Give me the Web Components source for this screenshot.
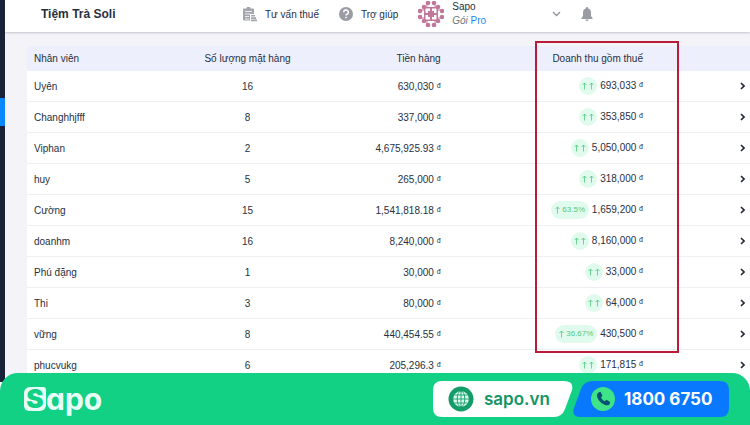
<!DOCTYPE html>
<html lang="vi">
<head>
  <meta charset="UTF-8">
  <meta name="viewport" content="width=device-width,initial-scale=1">
  <title>Tiệm Trà Soli</title>
  <style>
    html, body {
      height: 100%;
      margin: 0;
      overflow: hidden;
    }

    body {
      font-family: "Liberation Sans", Arial, sans-serif;
      font-size: 10px;
      color: #27303f;
    }
  </style>
</head>
<body>
  <soli-app>
    <soli-topbar slot="header" shop="Tiệm Trà Soli" user="Sapo" plan="Pro"></soli-topbar>
    <staff-report></staff-report>
    <sapo-footer slot="footer">
      <contact-pill slot="contacts" kind="web" href="#web">sapo.vn</contact-pill>
      <contact-pill slot="contacts" kind="phone" href="tel:18006750">1800 6750</contact-pill>
    </sapo-footer>
  </soli-app>

  <script>
    customElements.define("soli-app", class SoliApp extends HTMLElement {
      constructor() {
        super()
        this.attachShadow({ mode: "open" }).innerHTML = `
          <style>
            :host {
              display: flex;
              flex-direction: column;
              height: 100%;
              background: #fff;
            }

            .screen {
              flex: 1;
              min-height: 0;
              display: flex;
              margin-bottom: -9px;
            }

            aside {
              width: 5px;
              flex: none;
              display: flex;
              flex-direction: column;
              background: #18233a;
            }

            aside::before {
              content: "";
              height: 28px;
              margin-top: 98px;
              background: #0a88ff;
            }

            main {
              flex: 1;
              min-width: 0;
              overflow: hidden;
              background: #f3f3f8;
            }
          </style>
          <div class="screen">
            <aside></aside>
            <main>
              <slot name="header"></slot>
              <slot></slot>
            </main>
          </div>
          <slot name="footer"></slot>
        `
      }
    })

    customElements.define("soli-topbar", class SoliTopbar extends HTMLElement {
      constructor() {
        super()
        this.attachShadow({ mode: "open" }).innerHTML = `
          <style>
            :host {
              display: flex;
              align-items: center;
              height: 32px;
              padding: 0 36px;
              background: #fff;
              box-shadow: 0 1px 2px #c4c4cc;
            }

            h1 {
              flex: 1;
              margin: 0 0 4px;
              font-size: 12px;
              line-height: 16px;
            }

            nav {
              width: 472px;
              flex: none;
              display: flex;
              align-items: center;
              height: 28px;
              margin-bottom: 4px;
            }

            a {
              display: flex;
              align-items: center;
              gap: 8px;
              margin-right: 20px;
              color: inherit;
              text-decoration: none;
            }

            button {
              display: flex;
              padding: 0;
              border: 0;
              background: none;
            }

            .user {
              width: 143px;
              display: flex;
              align-items: center;
              gap: 8px;
              margin-right: 20px;
              font: inherit;
              line-height: 14px;
              text-align: left;
              color: inherit;
            }

            .name { flex: 1; }
            i { color: #707783; }
            b { font-weight: normal; color: #2487ed; }
            svg { display: block; flex: none; }
          </style>
          <h1></h1>
          <nav>
            <a href="#tax">
              <svg width="15" height="15" viewBox="0 0 15 15" fill="#a2a5ab">
                <path d="M2 1.500h2.500a2 2 0 0 1 4 0H11a1 1 0 0 1 1 1V7H8v6.500H2a1 1 0 0 1-1-1v-10a1 1 0 0 1 1-1z"/>
                <path d="M3 4.500h7M3 7h5M3 9.500h4M3 12h4" stroke="#fff" stroke-width=".8"/>
                <path d="M9 8h4v1.600H9zM9 10.300h5v1.600H9zM9 12.600h6v1.600H9z"/>
              </svg>
              Tư vấn thuế
            </a>
            <a href="#help">
              <svg width="14" height="14" viewBox="0 0 14 14">
                <circle cx="7" cy="7" r="7" fill="#999ca3"/>
                <path d="M4.700 5.300a2.300 2.300 0 1 1 3.300 2c-.8.4-1 .6-1 1.300M7 9.800v1.400" fill="none" stroke="#fff" stroke-width="1.500"/>
              </svg>
              Trợ giúp
            </a>
            <button class="user">
              <svg width="26" height="26" viewBox="0 0 26 26" fill="#c1789b">
                <path d="M6 6h14v14H6z"/>
                <path d="M7.500 7.500h4.500v4.500H7.500zM14 7.500h4.500v4.500H14zM7.500 14h4.500v4.500H7.500zM14 14h4.500v4.500H14z" fill="#fff"/>
                <path d="M10 10h2.500v2.500H10zM13.500 10H16v2.500h-2.500zM10 13.500h2.500V16H10zM13.500 13.500H16V16h-2.500z"/>
                <path d="M9 3v4M17 3v4M9 19v4M17 19v4M3 9h4M3 17h4M19 9h4M19 17h4" stroke="#c1789b"/>
                <g id="dots"></g>
              </svg>
              <span class="name"><span id="user"></span><br><i>Gói</i> <b></b></span>
              <svg width="9" height="6" viewBox="0 0 9 6" fill="none" stroke="#8d929b" stroke-width="1.300"><path d="M1 1l3.500 3.500L8 1"/></svg>
            </button>
            <button aria-label="Thông báo">
              <svg width="12" height="14" viewBox="0 0 12 14" fill="#999ca3"><path d="M6 0c.7 0 1 .5 1 1.200 2 .6 3 2.200 3 4.300V9l1.500 2v1h-11v-1L2 9V5.500c0-2.100 1-3.700 3-4.300C5 .5 5.300 0 6 0zM4.500 12.500h3a1.500 1.500 0 0 1-3 0z"/></svg>
            </button>
          </nav>
        `
      }

      connectedCallback() {
        const root = this.shadowRoot
        root.querySelector("h1").textContent = this.getAttribute("shop")
        root.getElementById("user").textContent = this.getAttribute("user")
        root.querySelector("b").textContent = this.getAttribute("plan")
        root.getElementById("dots").innerHTML = [
          [10, 2], [16, 2], [10, 24], [16, 24], [2, 10], [2, 16],
          [24, 10], [24, 16], [6, 6], [20, 6], [6, 20], [20, 20],
        ].map(([x, y]) => `<circle cx="${x}" cy="${y}" r="2.300"/>`).join("")
      }
    })

    const ARROW = `<svg width="5" height="8" viewBox="0 0 5 8" fill="none" stroke="currentColor" stroke-width=".8"><path d="M2.500 7.500V1M.5 3l2-2 2 2"/></svg>`

    customElements.define("trend-badge", class TrendBadge extends HTMLElement {
      constructor() {
        super()
        this.attachShadow({ mode: "open" }).innerHTML = `
          <style>
            :host {
              display: inline-flex;
              align-items: center;
              justify-content: center;
              gap: 2px;
              box-sizing: border-box;
              min-width: 18px;
              height: 18px;
              padding: 0 3px;
              border-radius: 9px;
              background: #e0fbee;
              color: #4fca7f;
              font-size: 8px;
              line-height: 18px;
            }

            :host([wide]) { padding: 0 4px; }
            svg { flex: none; }
          </style>
          ${ARROW}
          <slot>${ARROW}</slot>
        `
      }
    })

    const STAFF = [
      ["Uyên", "16", "630,030", "693,033"],
      ["Changhhjfff", "8", "337,000", "353,850"],
      ["Viphan", "2", "4,675,925.93", "5,050,000"],
      ["huy", "5", "265,000", "318,000"],
      ["Cường", "15", "1,541,818.18", "1,659,200", "63.5%"],
      ["doanhm", "16", "8,240,000", "8,160,000"],
      ["Phú đặng", "1", "30,000", "33,000"],
      ["Thi", "3", "80,000", "64,000"],
      ["vững", "8", "440,454.55", "430,500", "36.67%"],
      ["phucvukg", "6", "205,296.3", "171,815"],
    ]

    customElements.define("staff-report", class StaffReport extends HTMLElement {
      constructor() {
        super()
        this.attachShadow({ mode: "open" }).innerHTML = `
          <style>
            :host {
              display: block;
              position: relative;
              padding: 14px 0 0 22px;
            }

            table {
              width: 100%;
              table-layout: fixed;
              border-collapse: collapse;
              background: #fff;
            }

            th {
              height: 25px;
              padding: 0;
              background: #edf0fc;
              font-weight: normal;
            }

            td {
              height: 30px;
              padding: 0;
              border-bottom: 1px solid #efeff3;
            }

            th:first-child, td:first-child {
              padding-left: 7px;
              text-align: left;
            }

            .count { text-align: center; }
            .money { text-align: right; white-space: nowrap; }
            .money small { font-size: 7px; vertical-align: 2px; }
            td:last-child { padding-right: 5px; }

            button {
              display: block;
              margin-left: auto;
              padding: 0;
              border: 0;
              background: none;
            }

            svg { display: block; }
            trend-badge { vertical-align: middle; }

            /* frame over the tax-inclusive revenue column */
            .mark {
              position: absolute;
              top: 9px;
              right: 71px;
              width: 140px;
              height: 308px;
              border: 2px solid #b81c38;
              pointer-events: none;
            }
          </style>
          <table>
            <colgroup><col style="width: 22%"><col style="width: 17%"><col><col style="width: 28%"><col style="width: 107px"></colgroup>
            <thead>
              <tr>
                <th>Nhân viên</th>
                <th class="count">Số lượng mặt hàng</th>
                <th class="money">Tiền hàng</th>
                <th class="money">Doanh thu gồm thuế</th>
                <th></th>
              </tr>
            </thead>
            <tbody></tbody>
          </table>
          <div class="mark"></div>
        `
        this.shadowRoot.querySelector("tbody").innerHTML = STAFF.map(([name, count, net, gross, rate]) => `
          <tr>
            <td>${name}</td>
            <td class="count">${count}</td>
            <td class="money">${net} <small>đ</small></td>
            <td class="money">${rate ? `<trend-badge wide>${rate}</trend-badge>` : "<trend-badge></trend-badge>"} ${gross} <small>đ</small></td>
            <td>
              <button aria-label="Xem ${name}">
                <svg width="5" height="8" viewBox="0 0 5 8" fill="none" stroke="#222a35" stroke-width="1.600"><path d="M1 1l3 3-3 3"/></svg>
              </button>
            </td>
          </tr>
        `).join("")
      }
    })

    const PILLS = {
      web: {
        width: 140,
        shape: "M9 0h122q10 0 8 9l-7 19q-3 8-11 8H9q-9 0-9-9V9q0-9 9-9z",
        fill: "#fff",
        icon: `
          <circle cx="13" cy="13" r="12.500" fill="#149c68"/>
          <circle cx="13" cy="13" r="7.800" fill="#d9fff0"/>
          <path d="M5 13h16M6.500 9h13M6.500 17h13M13 5v16" stroke="#149c68" stroke-width=".9"/>
          <ellipse cx="13" cy="13" rx="3.800" ry="8" fill="none" stroke="#149c68" stroke-width=".9"/>
        `,
      },
      phone: {
        width: 156,
        shape: "M20 0h127q9 0 9 9v18q0 9-9 9H8q-10 0-7-9l7-19q3-8 12-8z",
        fill: "#0878ff",
        icon: `
          <circle cx="13" cy="13" r="12" fill="#3ee487"/>
          <path d="M8.500 6.500l2-.8 2 4-1.500 1.800q1.200 2.600 3.700 3.700l1.800-1.500 3.700 2.200-.8 2.600q-1.800 1.500-4.500.4-6.400-2.600-8-9-.3-2.200 1.600-3.400z" fill="#075273"/>
        `,
      },
    }

    customElements.define("contact-pill", class ContactPill extends HTMLElement {
      constructor() {
        super()
        this.attachShadow({ mode: "open" })
      }

      connectedCallback() {
        const { width, shape, fill, icon } = PILLS[this.getAttribute("kind")]
        this.shadowRoot.innerHTML = `
          <style>
            :host {
              display: block;
              color: #159465;
              font-size: 17px;
              font-weight: 600;
              line-height: 20px;
            }

            :host([kind="phone"]) {
              color: #fff;
              font-weight: 700;
            }

            a {
              position: relative;
              display: flex;
              align-items: center;
              gap: 10px;
              box-sizing: border-box;
              width: ${width}px;
              height: 36px;
              padding-left: 15px;
              color: inherit;
              text-decoration: none;
              white-space: nowrap;
            }

            :host([kind="phone"]) a {
              gap: 8px;
              padding-left: 17px;
            }

            .shape {
              position: absolute;
              inset: 0;
            }

            .icon, span { position: relative; }
          </style>
          <a href="${this.getAttribute("href")}">
            <svg class="shape" width="${width}" height="36" viewBox="0 0 ${width} 36" fill="${fill}"><path d="${shape}"/></svg>
            <svg class="icon" width="26" height="26" viewBox="0 0 26 26">${icon}</svg>
            <span><slot></slot></span>
          </a>
        `
      }
    })

    customElements.define("sapo-footer", class SapoFooter extends HTMLElement {
      constructor() {
        super()
        this.attachShadow({ mode: "open" }).innerHTML = `
          <style>
            :host {
              display: flex;
              align-items: center;
              position: relative;
              height: 52px;
              padding: 0 21px 0 24px;
              border-radius: 18px 18px 0 0;
              background: #12d084;
              font-family: Inter, sans-serif;
            }

            .logo {
              flex: 1;
              display: flex;
              align-items: center;
              color: #e8fff8;
              font-size: 30px;
              font-weight: 700;
              font-feature-settings: "cv11";
              line-height: 24px;
            }

            .logo b {
              width: 22px;
              height: 24px;
              border-radius: 6px 3px 6px 5px;
              background: #e8fff8;
              color: #12d084;
              font-size: 26px;
              text-align: center;
            }

            .contacts { display: flex; }
          </style>
          <div class="logo"><b>S</b><span>apo</span></div>
          <div class="contacts"><slot name="contacts"></slot></div>
        `
      }
    })
  </script>
</body>
</html>
